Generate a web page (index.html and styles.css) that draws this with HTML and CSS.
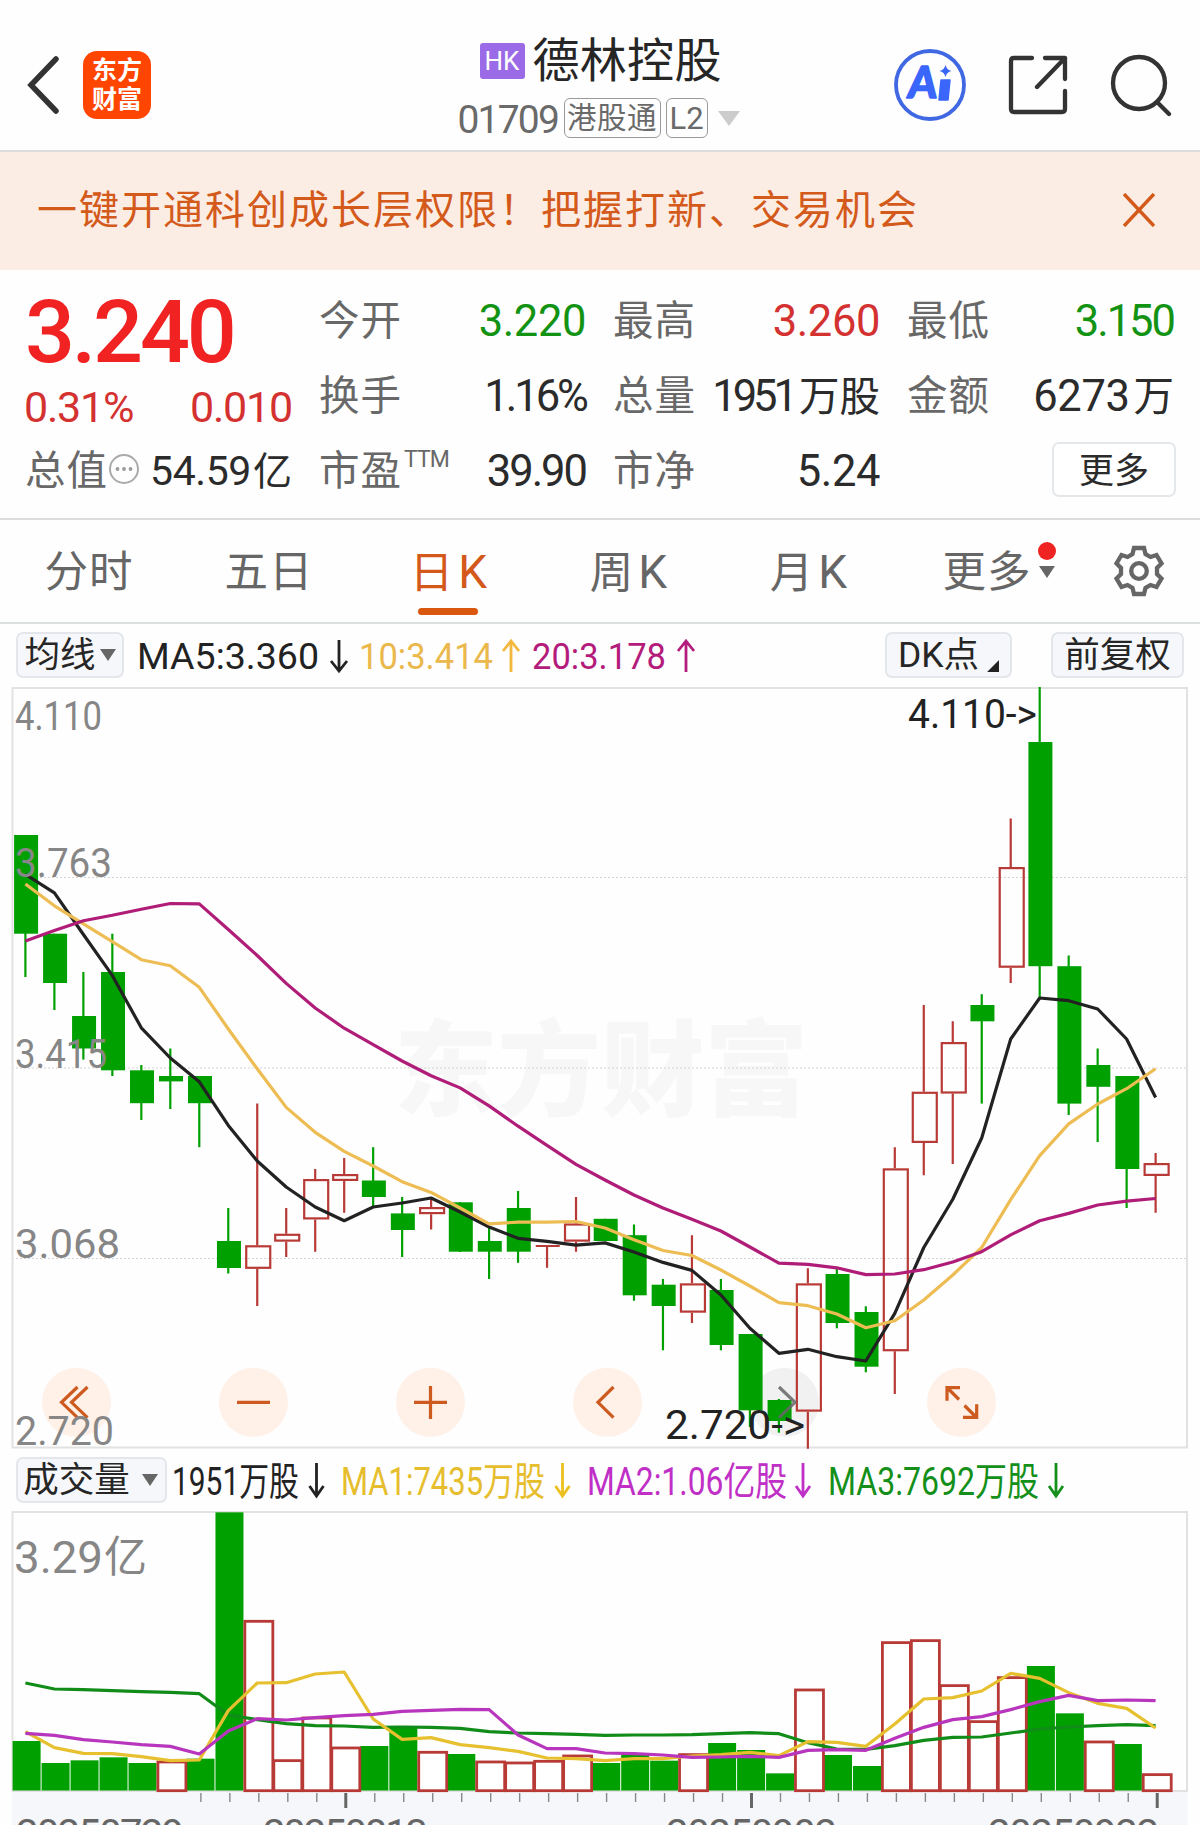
FILE: index.html
```html
<!DOCTYPE html>
<html lang="zh-CN">
<head>
<meta charset="utf-8">
<title>德林控股 01709</title>
<link rel="stylesheet" href="styles.css">
</head>
<body>
<header class="topbar">
  <div class="topbar-side">
    <svg class="back" width="32" height="60" viewBox="0 0 32 60"><path d="M29 4 4 30l25 26"/></svg>
    <div class="logo"><span>东方</span><span>财富</span></div>
  </div>
  <div class="stock">
    <div class="stock-name"><span class="market">HK</span><h1>德林控股</h1></div>
    <div class="stock-code"><span class="code">01709</span><span class="tag tag-wide">港股通</span><span class="tag">L2</span><i class="caret"></i></div>
  </div>
  <div class="topbar-side actions">
    <svg width="74" height="74" viewBox="0 0 74 74"><circle cx="37" cy="37" r="34" fill="none" stroke="#4068e2" stroke-width="3.8"/><text x="14" y="50.500" class="ai-letter" textLength="29" lengthAdjust="spacingAndGlyphs" transform="skewX(-6) translate(5 0)">A</text><path d="M48 32h9l-2 20h-9z" fill="#3a66fb" stroke="#3a66fb" stroke-width="1.500" stroke-linejoin="round"/><path d="M52.500 17q1.200 4.800 6 6-4.800 1.200-6 6-1.200-4.800-6-6 4.800-1.200 6-6z" fill="#3a66fb"/></svg>
    <svg width="60" height="60" viewBox="0 0 60 60" class="line-icon"><path d="M24 3H6q-3 0-3 3v48q0 3 3 3h48q3 0 3-3V36M37 3h20v21M57 3 29 32"/></svg>
    <svg width="64" height="64" viewBox="0 0 64 64" class="line-icon"><circle cx="30" cy="30" r="26"/><path d="m48 49 12 12"/></svg>
  </div>
</header>

<section class="banner">
  <p>一键开通科创成长层权限！把握打新、交易机会</p>
  <svg width="32" height="34" viewBox="0 0 32 34"><path d="m1 1 30 32M31 1 1 33"/></svg>
</section>

<section class="quote">
  <div class="price">3.240</div>
  <div class="change up"><span>0.31%</span><span>0.010</span></div>
  <div class="cell"><span class="label">总值</span><svg class="more-dot" width="32" height="32" viewBox="0 0 32 32"><circle cx="16" cy="16" r="14" fill="none" stroke="#aaa" stroke-width="2"/><circle cx="9.500" cy="16" r="1.900"/><circle cx="16" cy="16" r="1.900"/><circle cx="22.500" cy="16" r="1.900"/></svg><span class="value cap">54.59<b>亿</b></span></div>
  <div class="cell"><span class="label">今开</span><span class="value down">3.220</span></div>
  <div class="cell"><span class="label">换手</span><span class="value tighter">1.16%</span></div>
  <div class="cell"><span class="label">市盈<sup>TTM</sup></span><span class="value tight">39.90</span></div>
  <div class="cell"><span class="label">最高</span><span class="value up">3.260</span></div>
  <div class="cell"><span class="label">总量</span><span class="value tightest">1951<b>万股</b></span></div>
  <div class="cell"><span class="label">市净</span><span class="value">5.24</span></div>
  <div class="cell"><span class="label">最低</span><span class="value down tight">3.150</span></div>
  <div class="cell"><span class="label">金额</span><span class="value">6273<b class="spaced">万</b></span></div>
  <div class="cell cell-end"><button class="more">更多</button></div>
</section>

<nav class="tabs">
  <a>分时</a><a>五日</a><a class="active">日<span>K</span></a><a>周<span>K</span></a><a>月<span>K</span></a><a class="with-dot">更多<i class="badge"></i><i class="tri"></i></a>
  <svg width="56" height="56" viewBox="-28 -28 56 56"><path d="M-5-23H5l1.500 6 5 3 6-2 5 8.500-4.500 4.500v6l4.500 4.500-5 8.500-6-2-5 3L5 23H-5l-1.500-6-5-3-6 2-5-8.500L-18 3v-6l-4.500-4.500 5-8.500 6 2 5-3z"/><circle r="7.800"/></svg>
</nav>

<section class="legend">
  <button class="chip chip-ma">均线<i class="tri"></i></button>
  <svg width="740" height="62" viewBox="130 624 740 62">
    <g class="num" font-size="37.500">
      <text x="137" y="669" fill="#222" textLength="182" lengthAdjust="spacingAndGlyphs">MA5:3.360</text>
      <text x="359" y="669" fill="#ebb84c" textLength="134" lengthAdjust="spacingAndGlyphs">10:3.414</text>
      <text x="532" y="669" fill="#b41c7c" textLength="134" lengthAdjust="spacingAndGlyphs">20:3.178</text>
    </g>
    <g fill="none" stroke-width="2.800">
      <path stroke="#222" d="M339 640v31m-8-10 8 10 8-10"/>
      <path stroke="#f3b73d" d="M511 672v-31m-8 10 8-10 8 10"/>
      <path stroke="#b41c7c" d="M686 672v-31m-8 10 8-10 8 10"/>
    </g>
  </svg>
  <button class="chip chip-dk">DK点<i class="corner"></i></button>
  <button class="chip chip-fq">前复权</button>
</section>

<svg class="chart" width="1200" height="762" viewBox="0 687 1200 762">
  <text class="watermark" x="394" y="1108" textLength="414" lengthAdjust="spacingAndGlyphs">东方财富</text>
  <g fill="none" stroke="#d4d4d4" stroke-width="1.200" stroke-dasharray="2 2"><path d="M12 877.500H1187M12 1068H1187M12 1258.500H1187"/></g>
  <path d="M12.500 688H1187V1447.500H12.500z" fill="none" stroke="#e2e2e2" stroke-width="2"/>
  <g fill="#fff0e8"><circle cx="76.500" cy="1402.300" r="34.500"/><circle cx="253.500" cy="1402.300" r="34.500"/><circle cx="430.500" cy="1402.300" r="34.500"/><circle cx="607.500" cy="1402.300" r="34.500"/><circle cx="961.500" cy="1402.300" r="34.500"/><circle cx="784.500" cy="1402.300" r="34.500" fill="#f1f1f1"/></g>
  <g id="candles"></g>
  <g id="averages"></g>
  <g fill="none" stroke="#cd5a1f" stroke-width="3.200">
    <path d="m77.500 1387-16 15.300 16 15.300M87.500 1387l-16 15.300 16 15.300"/>
    <path d="M237 1402.300h33M414 1402.300h33M430.500 1386v33"/>
    <path d="m613.500 1387-15.500 15.300 15.500 15.300"/>
    <path d="M960 1387.700H947v13M947.500 1388l11.500 11.500M963 1417.300h13.700v-13M976 1417l-11.500-11.500"/>
    <path stroke="#666" stroke-opacity=".85" d="m779 1387 16 15.300-16 15.300"/>
  </g>
  <g class="num" font-size="40" fill="#868686">
    <text x="15" y="730" textLength="87" lengthAdjust="spacingAndGlyphs">4.110</text>
    <text x="15" y="877" textLength="97" lengthAdjust="spacingAndGlyphs">3.763</text>
    <text x="15" y="1068" textLength="92" lengthAdjust="spacingAndGlyphs">3.415</text>
    <text x="15" y="1258" textLength="105" lengthAdjust="spacingAndGlyphs">3.068</text>
    <text x="15" y="1445" textLength="99" lengthAdjust="spacingAndGlyphs">2.720</text>
  </g>
  <g class="num" font-size="40" fill="#222">
    <text x="908" y="728" textLength="129" lengthAdjust="spacingAndGlyphs">4.110-&gt;</text>
    <text x="665" y="1438.500" textLength="140" lengthAdjust="spacingAndGlyphs">2.720-&gt;</text>
  </g>
</svg>

<section class="legend volume-legend">
  <button class="chip chip-vol">成交量<i class="tri"></i></button>
  <svg width="920" height="62" viewBox="167 1449 920 62">
    <g class="num" font-size="39">
      <text x="172" y="1495" fill="#222" textLength="127" lengthAdjust="spacingAndGlyphs">1951万股</text>
      <text x="341" y="1495" fill="#e6bd2c" textLength="204" lengthAdjust="spacingAndGlyphs">MA1:7435万股</text>
      <text x="587" y="1495" fill="#c02fc6" textLength="200" lengthAdjust="spacingAndGlyphs">MA2:1.06亿股</text>
      <text x="828" y="1495" fill="#14901a" textLength="211" lengthAdjust="spacingAndGlyphs">MA3:7692万股</text>
    </g>
    <g fill="none" stroke-width="2.800">
      <path stroke="#222" d="M316.500 1463v33m-7-10 7 10 7-10"/>
      <path stroke="#ecc01e" d="M562.500 1463v33m-7-10 7 10 7-10"/>
      <path stroke="#c02fc6" d="M803 1463v33m-7-10 7 10 7-10"/>
      <path stroke="#14901a" d="M1056 1463v33m-7-10 7 10 7-10"/>
    </g>
  </svg>
</section>

<svg class="chart" width="1200" height="314" viewBox="0 1511 1200 314">
  <path d="M12 1792H1187.500V1825H12z" fill="#f6f7fa"/>
  <path d="M12.500 1512H1187V1791H12.500z" fill="none" stroke="#e2e2e2" stroke-width="2"/>
  <g id="volumes"></g>
  <g id="volume-averages"></g>
  <g id="ticks"></g>
  <g class="num" fill="#868686">
    <text x="14" y="1573" font-size="45" textLength="89" lengthAdjust="spacingAndGlyphs">3.29</text>
    <text x="104" y="1572" font-size="43">亿</text>
  </g>
  <g class="num" font-size="40" fill="#666">
    <text x="16" y="1848" textLength="168">20250729</text>
    <text x="263" y="1848" textLength="165">20250813</text>
    <text x="666" y="1848" textLength="171">20250902</text>
    <text x="988" y="1848" textLength="171">20250922</text>
  </g>
</svg>
<script src="chart.js"></script>
</body>
</html>
```
FILE: styles.css
```css
* { box-sizing: border-box; }
body { margin: 0; width: 1200px; height: 1825px; overflow: hidden; background: #fefefe; color: #2b2b2b; font-family: Roboto, "Noto Sans CJK SC", sans-serif; }
svg { display: block; flex: none; }
button { font: inherit; color: inherit; padding: 0; display: flex; align-items: center; }
h1, p { margin: 0; font-weight: 400; }

.topbar { height: 152px; border-bottom: 2px solid #dcdcdc; display: flex; justify-content: space-between; padding: 0 28px 0 27px; }
.topbar-side { width: 310px; display: flex; align-items: center; padding-top: 19px; }
.back { margin-right: 24px; fill: none; stroke: #333; stroke-width: 5.5; stroke-linecap: round; }
.logo { width: 68px; height: 68px; border-radius: 14px; background: #ff4500; color: #fff; display: flex; flex-direction: column; align-items: center; justify-content: center; font-weight: 700; font-size: 25px; line-height: 29px; }
.actions { gap: 41px; justify-content: flex-end; padding-right: 0; margin-right: -1px; }
.line-icon { fill: none; stroke: #333; stroke-width: 4.3; stroke-linecap: round; stroke-linejoin: round; }
.ai-letter { font: 900 44px Lato, sans-serif; fill: #3a66fb; stroke: #3a66fb; stroke-width: 1.5; stroke-linejoin: round; }
.stock { width: 300px; padding-top: 32px; display: flex; flex-direction: column; align-items: flex-start; margin-left: 5px; }
.stock-name { display: flex; align-items: center; gap: 8px; height: 58px; padding-left: 27px; }
.stock-name h1 { font-size: 47px; line-height: 58px; color: #262626; white-space: nowrap; letter-spacing: .3px; }
.market { width: 45px; height: 36px; border-radius: 3px; background: #9b6ae6; color: #fff; font-size: 26px; line-height: 37px; text-align: center; }
.stock-code { display: flex; align-items: center; height: 56px; color: #6a6a6a; padding-left: 5px; }
.code { width: 106px; font-size: 39px; letter-spacing: -1.8px; padding-top: 4px; }
.tag { width: 42px; height: 40px; border: 1.5px solid #999; border-radius: 6px; font-size: 31px; line-height: 39px; text-align: center; white-space: nowrap; margin-right: 5px; }
.tag-wide { width: 97px; font-size: 29.5px; line-height: 38px; letter-spacing: .5px; }
.caret { margin-left: 5px; border: 11px solid transparent; border-top: 15px solid #ccc; border-bottom: 0; }

.banner { height: 118px; background: #fcede4; color: #d35a1b; display: flex; align-items: center; justify-content: space-between; padding: 0 45px 2px 37px; }
.banner p { font-size: 40px; letter-spacing: 2px; padding-bottom: 6px; }
.banner svg { fill: none; stroke: #d35a1b; stroke-width: 3.5; }

.quote { height: 250px; border-bottom: 2px solid #dcdcdc; padding: 13px 26px 12px; display: grid; grid-template: repeat(3, 75px) / 266px 266px 266px 266px; column-gap: 28px; grid-auto-flow: column; }
.price { font-size: 88px; font-weight: 500; line-height: 98px; letter-spacing: -3.2px; color: #f02222; height: 98px; margin-left: -1px; }
.change { display: flex; justify-content: space-between; align-items: center; font-size: 43px; letter-spacing: -1.2px; padding-top: 23px; height: 75px; margin: 0 0 0 -2px; }
.cell { display: flex; align-items: center; justify-content: space-between; white-space: nowrap; }
.label { font-size: 40.5px; letter-spacing: 1px; color: #686868; line-height: 60px; margin: 1px 0 0 -1px; }
.label sup { font-size: 23px; letter-spacing: -1px; vertical-align: 18px; margin-left: 2px; line-height: 0; }
.value { font-size: 43.5px; line-height: 60px; letter-spacing: -.4px; margin-top: 3px; }
.value b { font-weight: 400; font-size: 40.5px; letter-spacing: 0; }
.value b.spaced { margin-left: 4px; }
.value.cap { font-size: 41px; margin-top: 2px; }
.value.cap b { font-size: 39px; margin-left: 2px; }
.tight { letter-spacing: -2px; }
.tighter { letter-spacing: -3px; }
.tightest { letter-spacing: -4px; }
.tightest b { margin-left: 5px; }
.up { color: #d43131; }
.down { color: #139313; }
.more-dot { fill: #999; margin: 0 auto 3px 0; }
.cell-end { justify-content: flex-end; }
.more { width: 124px; height: 55px; justify-content: center; border: 2px solid #e5e8ea; border-radius: 7px; background: #fff; font-size: 35px; margin: 0 -2px 2px 0; padding-bottom: 4px; }

.tabs { height: 104px; border-bottom: 2px solid #dcdfdf; display: flex; align-items: center; color: #666; }
.tabs a { width: 180px; height: 102px; line-height: 105px; font-size: 43.5px; text-align: center; position: relative; letter-spacing: 1px; padding-right: 2px; }
.tabs a span { margin-left: 4px; font-size: 46px; }
.tabs svg { margin-left: 31px; fill: none; stroke: #666; stroke-width: 4.3; }
.tabs .active { color: #d3581a; }
.active::after { content: ""; position: absolute; left: 58px; bottom: 7px; width: 60px; height: 7px; border-radius: 4px; background: #da5710; }
.badge { position: absolute; left: 138px; top: 22px; width: 18px; height: 18px; border-radius: 50%; background: #f02323; }
.tri { border: 8px solid transparent; border-top: 12px solid #666; border-bottom: 0; }
.with-dot .tri { position: absolute; left: 139px; top: 46px; }
.tabs .with-dot { padding-right: 6px; }

.legend { height: 63px; display: flex; align-items: center; padding-left: 16px; padding-bottom: 1px; }
.chip { height: 46px; border: 2px solid #e3e6ea; border-radius: 7px; background: #f6f7fa; font-size: 35.5px; justify-content: center; white-space: nowrap; color: #262626; line-height: 42px; flex: none; }
.chip-ma { width: 108px; margin-right: 6px; gap: 4px; }
.chip-dk { width: 127px; margin-left: 15px; gap: 8px; }
.chip-fq { width: 133px; margin-left: 39px; }
.chip-vol { width: 151px; gap: 12px; padding-right: 2px; }
.corner { width: 12px; height: 12px; background: #222; clip-path: polygon(100% 0, 100% 100%, 0 100%); align-self: flex-end; margin-bottom: 4px; }
.volume-legend { height: 62px; padding-bottom: 0; }
.num { font-family: Roboto, "Noto Sans CJK SC", sans-serif; }
.watermark { font: 900 104px "Noto Sans CJK SC", sans-serif; fill: #f7f7f7; }
.avg { fill: none; stroke-width: 3.2; stroke-linejoin: round; }
```
FILE: chart.js
```js
const STEP = 28.98, FIRST = 25.4;
const cx = i => FIRST + i * STEP;
const GREEN = '#00a000', RED = '#b83a36';

// [direction, high, body top, body bottom, low]
const candles = [
  ['g',835,835,933.7,977],['g',933.7,933.7,983,1010],['g',972,1016,1048.5,1059.6],['g',933.7,972,1070.3,1076],
  ['g',1065,1070.3,1103.2,1120],['g',1048.5,1076,1081.4,1109],['g',1076,1076,1103.2,1147.2],['g',1208,1241,1268,1273.5],
  ['r',1103.6,1245.2,1268.9,1306],['r',1208,1233.7,1241.7,1257],['r',1169,1179,1219.5,1251.7],['r',1158,1174,1181,1212.7],
  ['g',1147.2,1180.5,1197,1206],['g',1197,1213.4,1230,1257],['r',1197,1207,1214.2,1229.5],['g',1202.3,1202.3,1251.7,1252],
  ['g',1227,1241,1251.7,1279],['g',1191,1208,1251.7,1262.8],['r',1246,1245,1247,1267.8],['r',1197,1223.4,1241.7,1251.7],
  ['g',1218.8,1218.8,1241,1241],['g',1224.5,1235.2,1295.3,1300.7],['g',1279,1284.7,1306,1350.3],['r',1235.3,1283.3,1312.7,1323],
  ['g',1279,1290,1345,1350.3],['g',1334,1334,1410.3,1427],['g',1399,1400,1421,1432.7],['r',1268.3,1283.3,1411.7,1448.7],
  ['g',1269,1274,1323,1328.3],['g',1306.3,1312,1366.7,1372.3],['r',1147.2,1168.3,1351.3,1394],['r',1005,1091.7,1143,1175.2],
  ['r',1021.3,1042,1093.6,1164],['g',994.2,1005,1021.3,1103.6],['r',818.5,867,967.8,983],['g',687,742,966.2,997.6],
  ['g',955.5,966.2,1103.6,1115],['g',1048.5,1065,1086.8,1142],['g',1076,1076,1169,1208],['r',1153,1163,1176,1212.7]
];

const averages = [
  ['#222', [874.4,892.8,934.5,975.4,1027.8,1058,1081.8,1125.4,1161,1187,1207,1220.7,1207,1203,1198,1212,1227,1238.3,1241.4,1245.2,1242.9,1252,1262.4,1270.4,1295,1328.3,1353.3,1349.3,1356.7,1361,1313.3,1247.5,1199.3,1138,1039,998,1000.7,1009,1039,1097.5]],
  ['#edbd54', [884,905.8,923.8,941.7,959.7,965.8,987.3,1029,1068.8,1107.4,1132.3,1151.4,1166,1181.7,1192.4,1208,1223.8,1222.2,1222.2,1221.5,1228,1239.8,1250.5,1255.5,1270,1286,1302.7,1305.7,1314,1327.7,1320.7,1300,1275,1247.5,1199.6,1155.6,1123.9,1104,1088.7,1068.8]],
  ['#b01d78', [941,930.6,920.7,915.3,909.2,903.5,903.9,929.5,955.5,983.4,1008,1028.2,1044.7,1061,1075.7,1087.9,1105.9,1126.2,1145.3,1164.4,1180,1195,1208,1219.2,1231,1247,1263.2,1264.3,1267.8,1274.6,1274,1269.7,1262,1251.7,1234.9,1220.7,1213.4,1205,1201.2,1198.5]]
];

// Top edges, in thirds of a pixel below y = 1500
const volumes = [723,789,781,772,789,782,776,37,360,778,650,740,738,678,753,762,782,785,780,764,789,765,782,760,729,750,820,566,765,798,424,418,553,661,529,498,640,722,732,820];
const risingVolumes = new Set([5,8,9,10,11,14,16,17,18,19,23,27,30,31,32,33,34,37,39]);

const volumeAverages = [
  ['#118c18', [549,567,569,572,575,577,581,645,659,671,677,678,682,681,682,685,695,699,701,703,706,705,705,704,701,698,701,728,747,748,737,721,712,711,699,687,681,677,674,677]],
  ['#e6c02f', [695,743,760,761,770,782,780,632,549,548,522,516,657,718,713,734,743,754,774,776,782,776,776,768,764,757,767,725,727,739,672,597,593,573,520,535,578,610,625,684]],
  ['#b835bd', [700,706,719,726,734,739,762,693,656,660,653,647,643,634,631,628,629,705,746,746,759,761,765,772,771,769,772,751,749,751,715,682,659,650,629,605,586,602,600,602]]
];

const volumeY = v => 1500 + v / 3;
const polyline = (color, ys) =>
  `<polyline class="avg" stroke="${color}" points="${ys.map((y, i) => cx(i).toFixed(1) + ',' + y).join(' ')}"/>`;
const put = (id, markup) => { document.getElementById(id).innerHTML = markup; };

put('candles', candles.map(([dir, high, top, bottom, low], i) => {
  const x = cx(i), color = dir === 'g' ? GREEN : RED;
  const wick = `<path d="M${x} ${high}V${low}" stroke="${color}" stroke-width="2.2"/>`;
  if (dir === 'g' || bottom - top < 3) return wick + `<rect x="${x - 11.3}" y="${top}" width="24" height="${bottom - top}" fill="${color}"/>`;
  // Hollow bodies stay see-through, so the wick is drawn in two parts
  return `<path d="M${x} ${high}V${top}M${x} ${bottom}V${low}" stroke="${color}" stroke-width="2.2"/>`
    + `<rect x="${x - 11}" y="${top + 1.1}" width="24" height="${bottom - top - 2.2}" fill="none" stroke="${color}" stroke-width="2.2"/>`;
}).join(''));

put('averages', averages.map(([color, ys]) => polyline(color, ys)).join(''));

const bars = rising => volumes.map((v, i) => {
  if (risingVolumes.has(i) !== rising) return '';
  const x = 12.6 + i * STEP, y = volumeY(v);
  return rising
    ? `<rect x="${x + .4}" y="${y + 1.3}" width="28" height="${1789.4 - y}" fill="#fff" stroke="${RED}" stroke-width="2.8"/>`
    : `<rect x="${x}" y="${y}" width="28" height="${1790.5 - y}" fill="${GREEN}"/>`;
}).join('');
put('volumes', bars(false) + bars(true));

put('volume-averages', volumeAverages.map(([color, ys]) => polyline(color, ys.map(volumeY))).join(''));

let ticks = '';
for (let i = 6; i < 40; i++) {
  const major = i === 11 || i === 25 || i === 39;
  ticks += `<path d="M${cx(i) + 1.6} 1793V${major ? 1808 : 1802}" stroke="${major ? '#666' : '#888'}" stroke-width="${major ? 3 : 1.4}"/>`;
}
put('ticks', ticks);
```
